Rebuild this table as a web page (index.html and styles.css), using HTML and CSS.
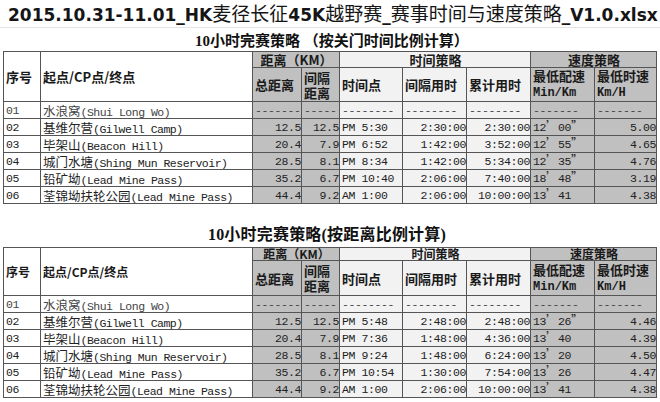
FILE: index.html
```html
<!DOCTYPE html>
<html lang="zh-CN">
<head>
<meta charset="utf-8">
<title>赛事时间与速度策略</title>
<link rel="stylesheet" href="styles.css">
</head>
<body>
<div class="title">2015.10.31-11.01_HK<span class="tc">麦径长征</span>45K<span class="tc">越野赛</span>_<span class="tc">赛事时间与速度策略</span>_V1.0.xlsx</div>

<div class="sub sub1">10小时完赛策略 （按关门时间比例计算）</div>
<table class="grid grid1">
<colgroup><col class="w1"><col class="w2"><col class="w3"><col class="w4"><col class="w5"><col class="w6"><col class="w7"><col class="w8"><col class="w9"></colgroup>
<tr class="h1"><th rowspan="2">序号</th><th rowspan="2">起点/CP点/终点</th><th colspan="2" class="g ctr">距离（KM）</th><th colspan="3" class="l ctr">时间策略</th><th colspan="2" class="g ctr">速度策略</th></tr>
<tr class="h2"><th class="g">总距离</th><th class="g">间隔<br>距离</th><th class="l">时间点</th><th class="l">间隔用时</th><th class="l">累计用时</th><th class="g">最低配速<br><span class="hen">Min/Km</span></th><th class="g">最低时速<br><span class="hen">Km/H</span></th></tr>
<tr class="r1"><td>01</td><td class="nm">水浪窝<span class="en">(Shui Long Wo)</span></td><td class="g">-------</td><td class="g nb">-----</td><td class="l nb">--------</td><td class="l nb">--------</td><td class="l nb">--------</td><td class="g">-------</td><td class="g nb">-------</td></tr>
<tr><td>02</td><td class="nm">基维尔营<span class="en">(Gilwell Camp)</span></td><td class="g r">12.5</td><td class="g r">12.5</td><td class="l">PM 5:30</td><td class="l r">2:30:00</td><td class="l r">2:30:00</td><td class="g">12<span class="q">’</span>00<span class="q">”</span></td><td class="g r">5.00</td></tr>
<tr><td>03</td><td class="nm">毕架山<span class="en">(Beacon Hill)</span></td><td class="g r">20.4</td><td class="g r">7.9</td><td class="l">PM 6:52</td><td class="l r">1:42:00</td><td class="l r">3:52:00</td><td class="g">12<span class="q">’</span>55<span class="q">”</span></td><td class="g r">4.65</td></tr>
<tr><td>04</td><td class="nm">城门水塘<span class="en">(Shing Mun Reservoir)</span></td><td class="g r">28.5</td><td class="g r">8.1</td><td class="l">PM 8:34</td><td class="l r">1:42:00</td><td class="l r">5:34:00</td><td class="g">12<span class="q">’</span>35<span class="q">”</span></td><td class="g r">4.76</td></tr>
<tr><td>05</td><td class="nm">铅矿坳<span class="en">(Lead Mine Pass)</span></td><td class="g r">35.2</td><td class="g r">6.7</td><td class="l">PM 10:40</td><td class="l r">2:06:00</td><td class="l r">7:40:00</td><td class="g">18<span class="q">’</span>48<span class="q">”</span></td><td class="g r">3.19</td></tr>
<tr><td>06</td><td class="nm">荃锦坳扶轮公园<span class="en">(Lead Mine Pass)</span></td><td class="g r">44.4</td><td class="g r">9.2</td><td class="l">AM 1:00</td><td class="l r">2:06:00</td><td class="l r">10:00:00</td><td class="g">13<span class="q">’</span>41</td><td class="g r">4.38</td></tr>
</table>

<div class="sub sub2">10小时完赛策略(按距离比例计算)</div>
<table class="grid grid2">
<colgroup><col class="w1"><col class="w2"><col class="w3"><col class="w4"><col class="w5"><col class="w6"><col class="w7"><col class="w8"><col class="w9"></colgroup>
<tr class="h1"><th rowspan="2">序号</th><th rowspan="2">起点/CP点/终点</th><th colspan="2" class="g ctr">距离（KM）</th><th colspan="3" class="l ctr">时间策略</th><th colspan="2" class="g ctr">速度策略</th></tr>
<tr class="h2"><th class="g">总距离</th><th class="g">间隔<br>距离</th><th class="l">时间点</th><th class="l">间隔用时</th><th class="l">累计用时</th><th class="g">最低配速<br><span class="hen">Min/Km</span></th><th class="g">最低时速<br><span class="hen">Km/H</span></th></tr>
<tr class="r1"><td>01</td><td class="nm">水浪窝<span class="en">(Shui Long Wo)</span></td><td class="g">-------</td><td class="g nb">-----</td><td class="l nb">--------</td><td class="l nb">--------</td><td class="l nb">--------</td><td class="g">-------</td><td class="g nb">-------</td></tr>
<tr><td>02</td><td class="nm">基维尔营<span class="en">(Gilwell Camp)</span></td><td class="g r">12.5</td><td class="g r">12.5</td><td class="l">PM 5:48</td><td class="l r">2:48:00</td><td class="l r">2:48:00</td><td class="g">13<span class="q">’</span>26<span class="q">”</span></td><td class="g r">4.46</td></tr>
<tr><td>03</td><td class="nm">毕架山<span class="en">(Beacon Hill)</span></td><td class="g r">20.4</td><td class="g r">7.9</td><td class="l">PM 7:36</td><td class="l r">1:48:00</td><td class="l r">4:36:00</td><td class="g">13<span class="q">’</span>40</td><td class="g r">4.39</td></tr>
<tr><td>04</td><td class="nm">城门水塘<span class="en">(Shing Mun Reservoir)</span></td><td class="g r">28.5</td><td class="g r">8.1</td><td class="l">PM 9:24</td><td class="l r">1:48:00</td><td class="l r">6:24:00</td><td class="g">13<span class="q">’</span>20</td><td class="g r">4.50</td></tr>
<tr><td>05</td><td class="nm">铅矿坳<span class="en">(Lead Mine Pass)</span></td><td class="g r">35.2</td><td class="g r">6.7</td><td class="l">PM 10:54</td><td class="l r">1:30:00</td><td class="l r">7:54:00</td><td class="g">13<span class="q">’</span>26</td><td class="g r">4.47</td></tr>
<tr><td>06</td><td class="nm">荃锦坳扶轮公园<span class="en">(Lead Mine Pass)</span></td><td class="g r">44.4</td><td class="g r">9.2</td><td class="l">AM 1:00</td><td class="l r">2:06:00</td><td class="l r">10:00:00</td><td class="g">13<span class="q">’</span>41</td><td class="g r">4.38</td></tr>
</table>
</body>
</html>
```

FILE: styles.css
```css
* { box-sizing: border-box; }
html, body { margin: 0; padding: 0; background: #ffffff; }
body {
  width: 660px;
  height: 402px;
  overflow: hidden;
  color: #1a1a1a;
  font-family: "Noto Sans CJK SC", sans-serif;
}

.title {
  height: 28px;
  padding-left: 8px;
  border-bottom: 1px solid #e4e4e4;
  white-space: nowrap;
  font-family: "DejaVu Sans", "Noto Sans CJK SC", sans-serif;
  font-weight: bold;
  font-size: 17px;
  line-height: 26px;
  color: #151515;
}
.title .tc {
  font-family: "Noto Sans CJK SC", sans-serif;
  font-weight: normal;
  font-size: 19px;
}

.sub {
  text-align: center;
  white-space: nowrap;
  font-family: "Liberation Serif", "Noto Sans CJK SC", serif;
  font-weight: bold;
  color: #111;
}
.sub1 {
  height: 23px;
  font-size: 15px;
  line-height: 26px;
  padding-left: 4px;
}
.sub2 {
  height: 43px;
  font-size: 16px;
  padding-top: 20px;
  line-height: 22px;
  padding-right: 6px;
  letter-spacing: 0.2px;
}

.grid {
  border-collapse: collapse;
  table-layout: fixed;
  width: 653px;
  margin-left: 3px;
}
.w1 { width: 37px; }
.w2 { width: 212px; }
.w3 { width: 49px; }
.w4 { width: 38px; }
.w5 { width: 63px; }
.w6 { width: 64px; }
.w7 { width: 64px; }
.w8 { width: 64px; }
.w9 { width: 62px; }

.grid th, .grid td {
  border: 1px solid #555555;
  padding: 0 1px 0 2px;
  overflow: hidden;
  white-space: nowrap;
  vertical-align: middle;
}
.grid th {
  text-align: left;
  font-family: "Noto Sans CJK SC", sans-serif;
  font-weight: bold;
  font-size: 13px;
  line-height: 15px;
  color: #1a1a1a;
}
.grid th.ctr { text-align: center; }
.grid .hen {
  font-family: "Liberation Mono", monospace;
  font-size: 12px;
  font-weight: bold;
}
.grid1 .h1 { height: 16px; }
.grid1 .h2 { height: 32px; }
.grid2 .h1 th { line-height: 12px; font-size: 12px; }
.grid2 .h1 { height: 13px; }
.grid2 .h2 { height: 35px; }

.grid td {
  height: 17px;
  font-family: "Liberation Mono", monospace;
  font-size: 11.5px;
  letter-spacing: -0.4px;
  line-height: 15px;
  color: #222;
}
.grid td.nm {
  font-family: "Noto Sans CJK SC", sans-serif;
  font-size: 12.5px;
  letter-spacing: 0;
}
.grid .en {
  font-family: "Liberation Mono", monospace;
  font-size: 11.5px;
  letter-spacing: -0.5px;
  line-height: 1px;
}
.grid .q {
  font-family: "Noto Sans CJK SC", sans-serif;
  font-size: 12px;
  letter-spacing: 0;
  line-height: 1px;
}
.grid td.r { text-align: right; padding-right: 0; }
.grid .g { background: #c0c0c0; }
.grid .l { background: #f2f2f2; }
.grid .r1 td { color: #444; }
.grid .r1 td.nb { border-left: none; }
```
